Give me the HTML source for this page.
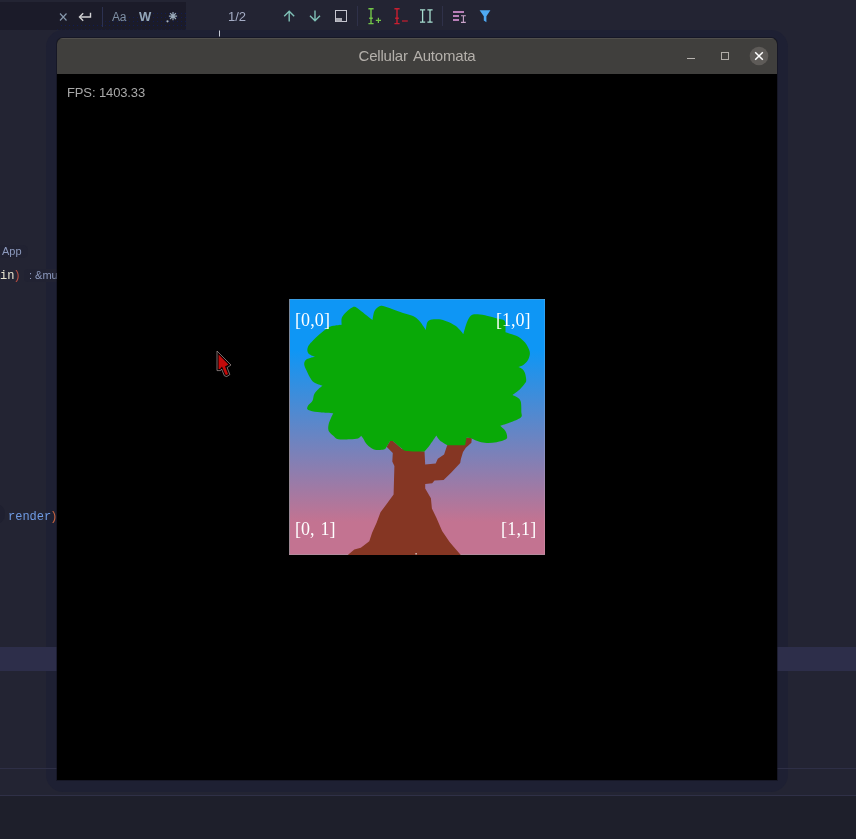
<!DOCTYPE html>
<html>
<head>
<meta charset="utf-8">
<title>Cellular Automata</title>
<style>
*{margin:0;padding:0;box-sizing:border-box}
html,body{width:856px;height:839px;overflow:hidden;background:#232433}
body{position:relative;font-family:"Liberation Sans",sans-serif}
.abs{position:absolute}
#search{left:0;top:2px;width:186px;height:27.5px;background:#1b1b29}
#curline{left:0;top:647px;width:856px;height:24px;background:#2d2e4a}
#hl1{left:0;top:768px;width:856px;height:1px;background:#2e2f46}
#hl2{left:0;top:795px;width:856px;height:1px;background:#2f3047}
#foot{left:0;top:796px;width:856px;height:43px;background:#1e1f2b}
#win{left:57px;top:38px;width:720px;height:742px;background:#000;border-radius:6px 6px 0 0;overflow:hidden;box-shadow:0 0 0 1px rgba(14,14,26,.5)}
#winshadow{left:46px;top:30px;width:742px;height:762px;border-radius:17px;background:rgba(20,22,50,.27)}
#tb{left:0;top:0;width:720px;height:36px;background:#403f3d;border-top:1px solid #514f4c}
#title{left:0;top:0;width:720px;height:36px;line-height:36px;text-align:center;color:#b4b0ab;font-size:15px;letter-spacing:-.2px;word-spacing:2px;will-change:transform}
#fps{left:10px;top:47px;color:#a8a8a8;font-size:13px;line-height:16px;white-space:nowrap;letter-spacing:-.12px;will-change:transform}
.code{will-change:transform;font-family:"Liberation Mono",monospace;font-size:12px;line-height:16px;white-space:pre}
.hint{will-change:transform;font-family:"Liberation Sans",sans-serif;font-size:11px;line-height:14px;color:#8c99bd;white-space:pre}
.lbl{will-change:transform;font-family:"Liberation Serif",serif;font-size:18px;line-height:20px;color:#fff;white-space:pre}
</style>
</head>
<body>
<!-- IDE background pieces -->
<div class="abs" id="search"></div>
<div class="abs" id="winshadow"></div>
<div class="abs" id="curline"></div>
<div class="abs" id="hl1"></div>
<div class="abs" id="hl2"></div>
<div class="abs" id="foot"></div>

<!-- IDE code fragments -->
<div class="abs" style="left:-6px;top:245px;width:34px;height:13px;border-radius:5px;background:#212232"></div>
<div class="abs" style="left:24px;top:269px;width:60px;height:13px;border-radius:4px;background:#212232"></div>
<div class="abs" style="left:-14px;top:504px;width:19px;height:20px;border-radius:9px;background:#1f2030"></div>
<div class="abs hint" style="left:2px;top:244px">App</div>
<div class="abs code" style="left:0;top:268px"><span style="color:#e8e4d0">in</span><span style="color:#b84c42;margin-left:-1px">)</span></div>
<div class="abs hint" style="left:29px;top:268px">: &amp;mu</div>
<div class="abs code" style="left:8px;top:509px"><span style="color:#6f9be4">render</span><span style="color:#c8643f;margin-left:-1px">)</span></div>

<!-- toolbar -->
<svg class="abs" id="toolbar" style="left:0;top:0" width="856" height="38" viewBox="0 0 856 38" fill="none" stroke-linecap="butt">
  <defs><pattern id="dots" x="1" y="0" width="4" height="4" patternUnits="userSpaceOnUse">
    <rect x="0" y="1" width="1" height="1" fill="#0d1d63"/>
  </pattern></defs>
  <polygon points="56,29.5 62,22.5 100,22.5 128,16 150,12 186,12 186,29.5" fill="url(#dots)" stroke="none" opacity=".7"/>
  <!-- close x -->
  <path d="M60 13.5 L66.5 20.5 M66.5 13.5 L60 20.5" stroke="#8799ad" stroke-width="1.15"/>
  <!-- enter arrow -->
  <path d="M90.5 12.8 V17 H80" stroke="#d2d2d4" stroke-width="1.4"/>
  <path d="M83.2 13.3 L79.5 17 L83.2 20.7" stroke="#d2d2d4" stroke-width="1.4"/>
  <rect x="102" y="7" width="1" height="20" fill="#2c3150" stroke="none"/>
  <!-- .* -->
  <circle cx="167.5" cy="21.3" r="1.1" fill="#a8b4c0" stroke="none"/>
  <path d="M173 12 V20.2 M168.9 16.1 H177.1 M170.1 13.2 L175.9 19 M175.9 13.2 L170.1 19" stroke="#9aaab8" stroke-width="1.2"/>
  <!-- caret tick -->
  <rect x="219" y="30.5" width="1" height="6" fill="#c8ccd8" stroke="none"/>
  <!-- up arrow -->
  <path d="M289.2 21.5 V11.5 M284.2 16.2 L289.2 11.2 L294.2 16.2" stroke="#7fc0b6" stroke-width="1.4"/>
  <!-- down arrow -->
  <path d="M315 10.5 V20.5 M310 15.8 L315 20.8 L320 15.8" stroke="#7fc0b6" stroke-width="1.4"/>
  <!-- box -->
  <rect x="335.5" y="10.5" width="11" height="11" stroke="#c6c6d0" stroke-width="1"/>
  <rect x="336" y="18" width="6" height="3.5" fill="#a9a9b2" stroke="none"/>
  <rect x="357" y="6" width="1" height="20" fill="#2f3149" stroke="none"/>
  <!-- I+ green -->
  <path d="M371 9 V23.5 M368.4 8.8 H373.6 M368.4 23.6 H373.6 M369.2 18.3 H372.8" stroke="#72c548" stroke-width="1.4"/>
  <path d="M375.8 20.4 H381 M378.4 17.8 V23" stroke="#72c548" stroke-width="1.2"/>
  <!-- I- red -->
  <path d="M397 9 V23.5 M394.4 8.8 H399.6 M394.4 23.6 H399.6 M395.2 18.3 H398.8" stroke="#c81f30" stroke-width="1.4"/>
  <path d="M402 21 H407.8" stroke="#c81f30" stroke-width="1.2"/>
  <!-- II teal -->
  <path d="M422.6 10 V22 M420 9.8 H425.2 M420 22.2 H425.2" stroke="#a6ddd0" stroke-width="1.3"/>
  <path d="M430 10 V22 M427.4 9.8 H432.6 M427.4 22.2 H432.6" stroke="#a6ddd0" stroke-width="1.3"/>
  <rect x="442" y="6" width="1" height="20" fill="#2f3149" stroke="none"/>
  <!-- purple lines + I -->
  <path d="M453 12 H464 M453 16 H459 M453 20 H459" stroke="#b87fb8" stroke-width="1.8"/>
  <path d="M463.4 16 V22.3 M461 15.8 H465.8 M461 22.4 H465.8" stroke="#caa4ca" stroke-width="1.1"/>
  <!-- funnel -->
  <path d="M479.6 10.2 H490.4 L486.4 16.2 V22.2 L483.8 20.6 V16.2 Z" fill="#4ea9f2" stroke="none"/>
</svg>
<div class="abs" style="left:112px;top:9px;font-size:12px;line-height:16px;color:#7e8fa3;letter-spacing:-.2px;will-change:transform">Aa</div>
<div class="abs" style="left:139px;top:9px;font-size:13px;line-height:16px;color:#93a6b8;font-weight:bold;will-change:transform">W</div>
<div class="abs" style="left:228px;top:9px;font-size:13px;line-height:16px;color:#a4acc4;will-change:transform">1/2</div>

<!-- window -->
<div class="abs" id="win">
  <div class="abs" id="tb"></div>
  <div class="abs" id="title">Cellular Automata</div>
  <div class="abs" id="fps">FPS: 1403.33</div>
  <!-- window buttons -->
  <svg class="abs" style="left:620px;top:0" width="100" height="36" viewBox="677 38 100 36" fill="none">
    <path d="M687 58.5 H695" stroke="#b8b4b0" stroke-width="1"/>
    <rect x="721.5" y="52.5" width="7" height="7" stroke="#b0aca8" stroke-width="1"/>
    <circle cx="759" cy="56" r="9.3" fill="#5e5b58"/>
    <path d="M755.2 52.2 L762.8 59.8 M762.8 52.2 L755.2 59.8" stroke="#fff" stroke-width="1.5"/>
  </svg>
  <!-- tree image -->
  <svg class="abs" style="left:232px;top:261px" width="256" height="256" viewBox="289 299 256 256">
    <defs><linearGradient id="sky" x1="0" y1="0" x2="0" y2="1">
      <stop offset="0" stop-color="#0e96f5"/><stop offset=".2" stop-color="#0e96f5"/>
      <stop offset=".87" stop-color="#c37391"/><stop offset="1" stop-color="#c37391"/>
    </linearGradient></defs>
    <rect x="289" y="299" width="256" height="256" fill="url(#sky)"/>
    <linearGradient id="lcol" x1="0" y1="0" x2="0" y2="1"><stop offset="0" stop-color="#74889e"/><stop offset="1" stop-color="#a08792"/></linearGradient>
    <rect x="289" y="299" width="256" height="1" fill="#3a9ce0"/>
    <rect x="289" y="299" width="1" height="256" fill="url(#lcol)"/>
    <rect x="544" y="299" width="1" height="256" fill="#fff" opacity=".12"/>
    <rect x="289" y="554" width="256" height="1" fill="#b58a9c"/>
    <polygon id="trunk" fill="#853623" points="386.6,446.7 390.1,441.1 392.9,441.1 402,449 424.5,451.6 425.2,464.4 435.7,463.6 437.8,458.8 444.1,454.4 447.2,445.3 466.5,437.6 471.8,438.3 471.4,442.8 465.8,447.8 463,452 460.9,459 460.2,462.9 451.3,472.5 443.6,480 434.5,480.4 432.2,483.2 425.2,484 425.2,488.4 430.9,498.2 431.9,508.5 436.5,517.9 442.1,530.9 449.6,542.1 460.8,555 347.8,555 354.3,549.6 360.8,547.8 369.3,541.2 372.1,532.8 376.7,522.5 380.5,512.2 386.1,504.8 393.6,494.5 394.4,466 392.3,461.6 392.8,453"/>
    <path id="leaves" fill="#09a907" d="M372.5 320C372.8 318.5 373.4 313.2 374.5 311C375.6 308.8 377.6 307.3 379 306.5C380.4 305.7 380.8 305.6 383 306C385.2 306.4 388.7 307.8 392 309C395.3 310.2 399.5 311.8 403 313C406.5 314.2 410.3 314.8 413 316C415.7 317.2 417.2 318.8 419 320.5C420.8 322.2 422.4 324.9 423.5 326.5C424.6 328.1 425.4 329.4 425.8 330C426.1 328.7 426.5 323.8 427.5 322C428.5 320.2 430.1 319.9 432 319.5C433.9 319.1 436.5 319 439 319.3C441.5 319.6 444.3 320.5 447 321.5C449.7 322.5 452.8 324.1 455 325.5C457.2 326.9 458.6 328.6 460 330C461.4 331.4 462.8 333.5 463.3 334.2C463.8 332.7 465.1 327.7 466 325C466.9 322.3 467.8 319.8 469 318C470.2 316.2 471.2 315.1 473 314.5C474.8 313.9 477.2 314.2 480 314.5C482.8 314.8 487.2 315.8 490 316.5C492.8 317.2 494.8 317.9 497 318.5C499.2 319.1 502.1 319.2 503.5 320C504.9 320.8 505 320.9 505.3 323C505.6 325.1 505.5 330.8 505.5 332.3C506.2 332.5 507.9 333 510 333.7C512.1 334.4 515.8 335.2 518.3 336.7C520.8 338.2 523.2 340.3 525 342.5C526.8 344.7 528.4 347.9 529.2 350C530 352.1 530 353.2 529.7 355C529.4 356.8 528.6 359.1 527.5 360.8C526.4 362.5 524.8 364 523.3 365C521.8 366 519.1 366.7 518.3 367C519 367.4 521.4 368.1 522.5 369.2C523.6 370.2 524.4 371.5 525 373.3C525.6 375.1 526.2 378.3 526.2 380C526.2 381.7 526 381.8 525 383.3C524 384.8 522.1 387.2 520 389.2C517.9 391.1 513.8 394 512.5 395C513.3 395.4 516.1 396.4 517.5 397.5C518.9 398.6 520.2 399.3 520.8 401.7C521.4 404.1 521.3 409.1 521.3 411.7C521.3 414.3 522.7 415.7 520.8 417.5C518.9 419.3 513.4 421.1 510 422.5C506.6 423.9 501.9 425.2 500.3 425.8C501.1 426.6 504.1 429.1 505.2 430.7C506.3 432.3 506.9 434.2 507 435.6C507.1 437 507.7 438.2 506 439.3C504.3 440.4 499.8 441.6 496.6 442.2C493.4 442.8 489.7 443 486.8 442.9C483.9 442.8 482 442.4 479.5 441.7C477 441 473.2 439.3 472 438.8L471.5 438.3L466.5 437.6L465.1 445.3L447.6 445.3C446.3 444.5 441.8 442 439.9 440.4C438 438.8 437 436.3 436.4 435.5C435.4 436.9 432.4 441.5 430.4 444.2C428.4 446.9 425.5 450.4 424.5 451.6C421.5 451.5 410 451.4 406.3 450.9C402.6 450.4 404.3 450.4 402.1 448.8C399.9 447.2 394.4 442.4 392.9 441.1L390.1 441.1L386.6 446.7C386.1 447.2 385.9 449 383.8 449.5C381.7 450 376.8 450.3 374 449.5C371.2 448.7 368.8 446.4 367 444.6C365.2 442.8 364.2 440.1 363.2 438.6C362.2 437.1 361.5 436.3 361.2 435.8C360.7 436.2 359.9 437.8 358 438.4C356.1 439 353.3 439.1 350 439.3C346.7 439.5 341.2 439.9 338.4 439.3C335.6 438.7 334.6 436.9 333 435.5C331.4 434.1 329.3 432.5 328.6 430.7C327.9 428.9 328.2 426.6 328.6 424.5C329 422.4 330.2 419.9 331 418C331.8 416.1 332.9 414.1 333.3 413.3C331.1 413.1 324.2 412.9 320 412.3C315.8 411.8 310.3 411.1 308.3 410C306.3 408.9 307.3 407.3 308 405.8C308.7 404.3 311.5 402.7 312.5 400.8C313.5 398.9 313.2 396.1 314.2 394.2C315.2 392.3 316.9 390.6 318.3 389.2C319.7 387.8 321.8 386.4 322.5 385.8C321.1 385.2 316.3 383.9 314.2 382.5C312.1 381.1 311.3 379.6 310 377.5C308.7 375.4 307.3 372.2 306.3 370C305.3 367.8 304.3 365.9 304.2 364.2C304.1 362.5 304.8 361 305.8 360C306.8 359 308.5 358.6 310 358C311.5 357.4 314.2 356.9 315 356.7C313.9 356.1 309.5 355 308.3 353.3C307.1 351.6 307 349.1 308 346.7C309 344.3 311.9 341.6 314.2 339.2C316.5 336.8 319.3 334.4 321.7 332.5C324.1 330.6 326.4 328.6 328.3 327.5C330.2 326.4 331.1 326.3 333.3 325.8C335.5 325.3 340.3 324.9 341.7 324.7C341.7 323.6 341.1 320.2 341.7 318.3C342.2 316.4 343.5 315 345 313.3C346.5 311.6 349.3 309.4 350.8 308.3C352.3 307.2 353.1 306.7 354.2 306.7C355.3 306.7 355.7 307.1 357.5 308.3C359.3 309.6 362.5 312.2 365 314.2C367.5 316.1 371.2 319 372.5 320Z"/>
    <rect x="415.5" y="553" width="1.2" height="1.5" fill="#e8dcdc"/>
  </svg>
  <div class="abs lbl" style="left:238px;top:272.4px;letter-spacing:.1px">[0,0]</div>
  <div class="abs lbl" style="left:439.3px;top:272.4px">[1,0]</div>
  <div class="abs lbl" style="left:238.3px;top:481.4px;word-spacing:1.6px">[0, 1]</div>
  <div class="abs lbl" style="left:444.3px;top:481.4px;letter-spacing:.2px">[1,1]</div>
  <!-- cursor -->
  <svg class="abs" style="left:153px;top:308px" width="30" height="36" viewBox="210 346 30 36">
    <polygon points="217,351 217,370.6 220.6,370.6 221.6,369 224.4,375.8 226.8,376.6 229.8,374.6 227.2,367.6 231,365" fill="#0a0000" stroke="#a89898" stroke-width=".7" stroke-linejoin="round"/>
    <polygon points="218.6,354.6 218.6,369 220,369 222,366.6 225.4,374.6 226.6,375 228,374 225,366.6 228.4,364.6" fill="#c40a0a"/>
  </svg>
</div>
</body>
</html>
